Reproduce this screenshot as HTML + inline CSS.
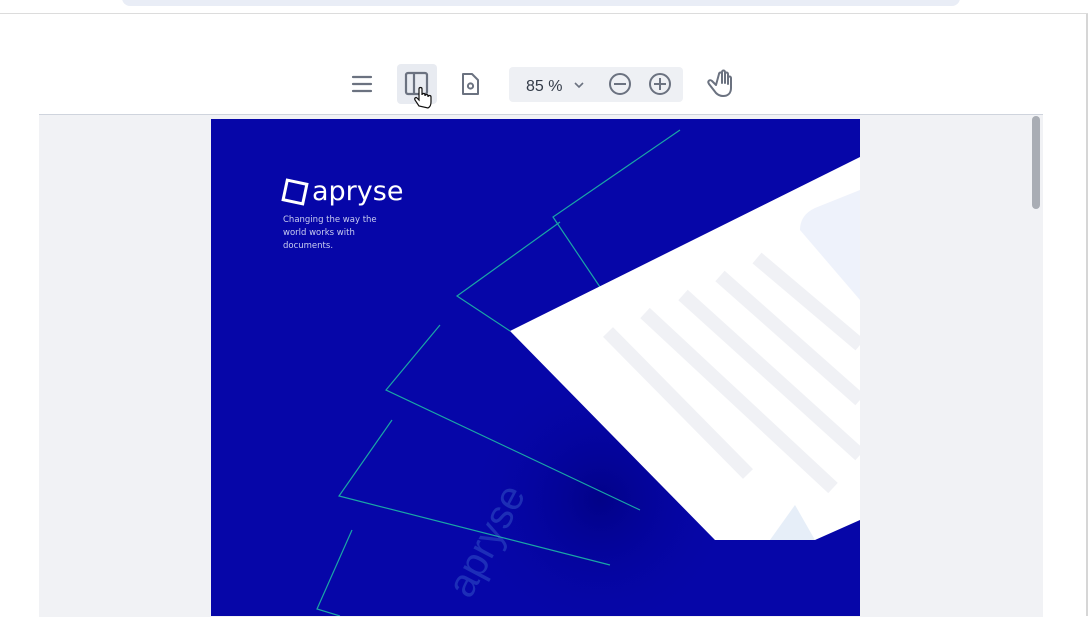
<!DOCTYPE html>
<html><head><style>
body{margin:0;width:1088px;height:616px;overflow:hidden;background:#fff;font-family:"Liberation Sans",sans-serif;position:relative}
.abs{position:absolute}
</style></head><body>
<div class="abs" style="left:122px;top:-10px;width:838px;height:16px;background:#e9edf6;border-radius:8px"></div>
<div class="abs" style="left:0;top:13px;width:1088px;height:1px;background:#dcdcdc"></div>
<div class="abs" style="left:1086px;top:14px;width:2px;height:602px;background:#d6d6d6"></div>
<!-- toolbar -->
<svg class="abs" style="left:340px;top:60px" width="400" height="50" viewBox="340 60 400 50">
 <g stroke="#6b7280" stroke-width="2.2" fill="none" stroke-linecap="round">
  <path d="M353 77h18M353 84h18M353 91h18"/>
 </g>
 <rect x="397" y="64" width="40" height="40" rx="4" fill="#e8ebf1"/>
 <rect x="406" y="73" width="21" height="21" rx="2" fill="none" stroke="#6b7280" stroke-width="2.2"/>
 <path d="M414 73v21" stroke="#6b7280" stroke-width="2.2"/>
 <path d="M419 106 l-4 -6 c-1-2 1-3 2-2 l2 2 v-11 c0-2 3-2 3 0 v6 c0-2 3-2 3 0 v1 c0-2 3-2 3 0 v1 c0-2 3-2 3 0 v5 c0 3-1 5-3 6z" fill="#fff" stroke="#111" stroke-width="1.2"/>
 <path d="M463 74h9l6 6v14h-15z" fill="none" stroke="#6b7280" stroke-width="2" stroke-linejoin="round"/>
 <circle cx="470.5" cy="86" r="2.6" fill="none" stroke="#6b7280" stroke-width="2"/>
 <rect x="509" y="67" width="174" height="35" rx="4" fill="#eef0f4"/>
 <text x="526" y="91" font-size="16" fill="#333b48" font-family="Liberation Sans">85 %</text>
 <path d="M575 83l4 4 4-4" stroke="#6b7280" stroke-width="1.6" fill="none"/>
 <circle cx="620" cy="84" r="10" fill="none" stroke="#6b7280" stroke-width="2"/>
 <path d="M614 84h12" stroke="#6b7280" stroke-width="2"/>
 <circle cx="660" cy="84" r="10" fill="none" stroke="#6b7280" stroke-width="2"/>
 <path d="M654 84h12M660 78v12" stroke="#6b7280" stroke-width="2"/>
 <path d="M716 85 l-4-4 c-2-2-5 0-3 3 l7 9 c2 2 4 3 7 3 c5 0 8-3 8-8 v-10 c0-2-3-2-3 0 v6 v-10 c0-2-3-2-3 0 v9 v-11 c0-2-3-2-3 0 v11 v-9 c0-2-3-2-3 0z" fill="none" stroke="#6b7280" stroke-width="2" stroke-linejoin="round"/>
</svg>
<!-- viewer -->
<div class="abs" style="left:39px;top:114px;width:1004px;height:502px;background:#f1f2f5;border-top:1px solid #cfd4dd"></div>
<div class="abs" style="left:1032px;top:116px;width:8px;height:93px;background:#a9adb4;border-radius:4px"></div>
<svg class="abs" style="left:211px;top:119px" width="649" height="497" viewBox="211 119 649 497">
 <defs>
  <radialGradient id="sh" cx="600" cy="500" r="140" gradientUnits="userSpaceOnUse">
   <stop offset="0" stop-color="#00007a" stop-opacity=".7"/><stop offset="1" stop-color="#0606a8" stop-opacity="0"/>
  </radialGradient>
 </defs>
 <rect x="211" y="119" width="649" height="497" fill="#0606a8"/>
 <rect x="211" y="119" width="649" height="497" fill="url(#sh)"/>
 <g fill="none" stroke="#1aa6a6" stroke-width="1.2">
  <path d="M680 130L553 217L602 290"/>
  <path d="M560 222L457 296L510 331"/>
  <path d="M440 325L386 390L640 510"/>
  <path d="M392 420L339 496L610 565"/>
  <path d="M352 530L317 609L340 616"/>
 </g>
 <path d="M510 331L860 157V520L815 540H715Z" fill="#ffffff"/>
 <g stroke="#f0f1f5" stroke-width="14" stroke-linecap="butt">
  <path d="M608 332L748 474"/><path d="M645 313L833 488"/><path d="M683 295L860 455"/><path d="M720 276L860 400"/><path d="M757 258L860 345"/>
 </g>
 <path d="M800 230Q800 215 815 208L860 190V300Z" fill="#eef2fb"/>
 <path d="M770 540L795 505L815 540Z" fill="#e6eef8"/>
 <text x="0" y="0" font-size="40" fill="#4a7ad8" fill-opacity=".35" transform="translate(470 600) rotate(-62)" font-family="Liberation Sans">apryse</text>
 <g transform="translate(283 180)">
  <rect x="2" y="2" width="20" height="20" fill="none" stroke="#fff" stroke-width="3" transform="rotate(12 12 12)"/>
 </g>
 <text x="312" y="200" font-size="27" fill="#fff" font-family="DejaVu Sans">apryse</text>
 <g font-size="8.5" fill="#c9cdf0" font-family="DejaVu Sans">
  <text x="283" y="222">Changing the way the</text>
  <text x="283" y="235">world works with</text>
  <text x="283" y="248">documents.</text>
 </g>
</svg>
</body></html>
